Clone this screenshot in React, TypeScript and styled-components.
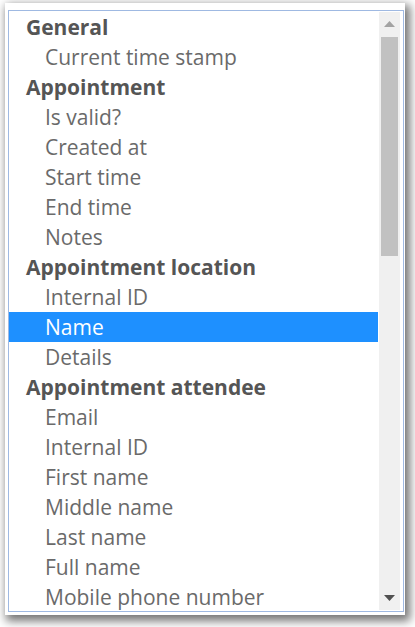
import React from "react";
import styled, { createGlobalStyle } from "styled-components";

const GlobalStyle = createGlobalStyle`
  html, body {
    margin: 0;
    padding: 0;
    background: #ffffff;
  }
`;

const Frame = styled.div`
  margin: 3px 10px 12px 5px;
  padding: 7px 1px 3px 3px;
  background: #ffffff;
  box-shadow: 3px 4px 9px 2px rgba(0, 0, 0, 0.55);
`;

const ListBox = styled.div`
  display: flex;
  height: 600px;
  border: 1px solid #9fb9e2;
  background: #ffffff;
  overflow: hidden;
`;

const Options = styled.div`
  flex: 1;
  padding-top: 1px;
  overflow: hidden;
  font-family: "Open Sans", "Liberation Sans", sans-serif;
  font-size: 21px;
`;

const Option = styled.div<{ $group?: boolean; $selected?: boolean }>`
  height: 30px;
  line-height: 30px;
  white-space: nowrap;
  padding-left: ${(p) => (p.$group ? "17px" : "36px")};
  font-weight: ${(p) => (p.$group ? 700 : 400)};
  color: ${(p) => (p.$selected ? "#ffffff" : p.$group ? "#555555" : "#6a6a6a")};
  background: ${(p) => (p.$selected ? "#1e90ff" : "transparent")};
`;

const Scrollbar = styled.div`
  width: 21px;
  margin: 1px 3px 1px 1px;
  display: flex;
  flex-direction: column;
  background: #f0f0f0;
`;

const ArrowButton = styled.div`
  height: 24px;
  display: flex;
  align-items: center;
  justify-content: center;
`;

const Thumb = styled.div`
  height: 219px;
  margin: 1px 2px 0;
  background: #c1c1c1;
`;

const Track = styled.div`
  flex: 1;
`;

type Item = { label: string; group?: boolean; selected?: boolean };

const items: Item[] = [
  { label: "General", group: true },
  { label: "Current time stamp" },
  { label: "Appointment", group: true },
  { label: "Is valid?" },
  { label: "Created at" },
  { label: "Start time" },
  { label: "End time" },
  { label: "Notes" },
  { label: "Appointment location", group: true },
  { label: "Internal ID" },
  { label: "Name", selected: true },
  { label: "Details" },
  { label: "Appointment attendee", group: true },
  { label: "Email" },
  { label: "Internal ID" },
  { label: "First name" },
  { label: "Middle name" },
  { label: "Last name" },
  { label: "Full name" },
  { label: "Mobile phone number" },
];

const Triangle = ({ up, color }: { up?: boolean; color: string }) => (
  <svg width="11" height="6" viewBox="0 0 11 6">
    <path d={up ? "M0 6 L5.5 0 L11 6 Z" : "M0 0 L5.5 6 L11 0 Z"} fill={color} />
  </svg>
);

export default function App() {
  return (
    <>
      <GlobalStyle />
      <Frame>
        <ListBox>
          <Options>
            {items.map((item, i) => (
              <Option key={i} $group={item.group} $selected={item.selected}>
                {item.label}
              </Option>
            ))}
          </Options>
          <Scrollbar>
            <ArrowButton>
              <Triangle up color="#a3a3a3" />
            </ArrowButton>
            <Thumb />
            <Track />
            <ArrowButton>
              <Triangle color="#505050" />
            </ArrowButton>
          </Scrollbar>
        </ListBox>
      </Frame>
    </>
  );
}
